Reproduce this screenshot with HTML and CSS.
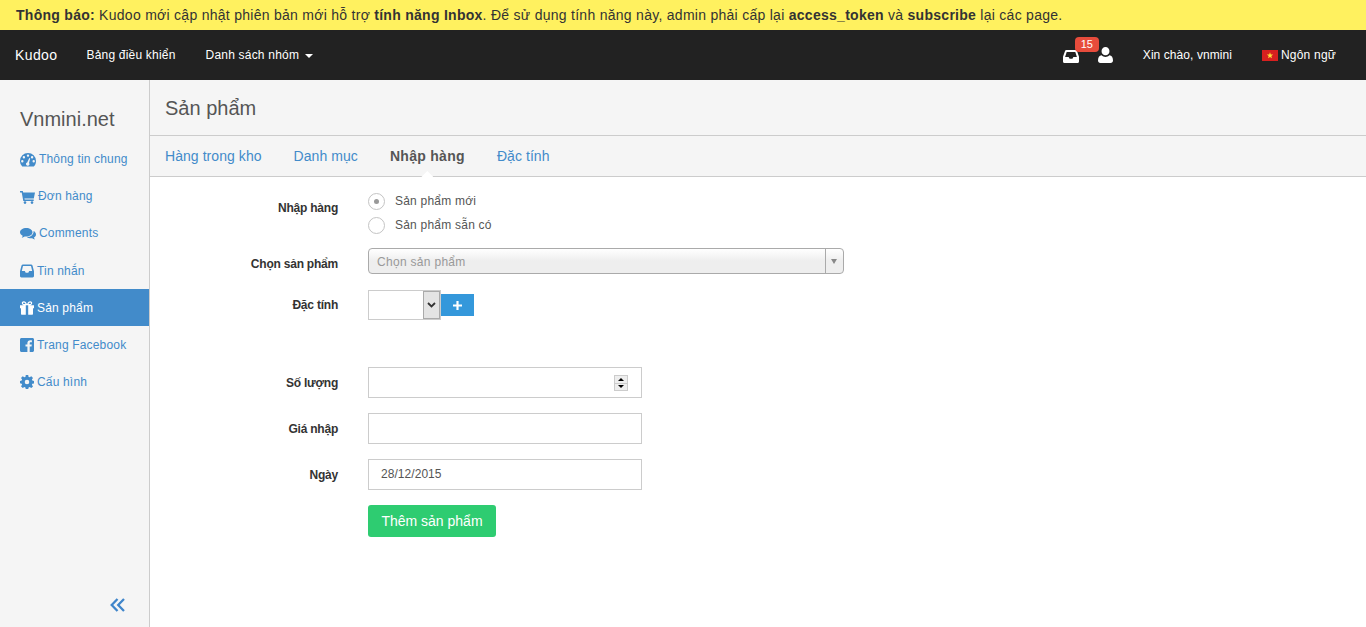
FILE: index.html
```html
<!DOCTYPE html>
<html lang="vi">
<head>
<meta charset="utf-8">
<title>Kudoo</title>
<link rel="stylesheet" href="styles.css">
</head>
<body>
<div class="notice"><b>Thông báo:</b> Kudoo mới cập nhật phiên bản mới hỗ trợ <b>tính năng Inbox</b>. Để sử dụng tính năng này, admin phải cấp lại <b>access_token</b> và <b>subscribe</b> lại các page.</div>
<nav class="topbar">
  <a class="brand">Kudoo</a>
  <a class="top-link">Bảng điều khiển</a>
  <a class="top-link">Danh sách nhóm <i class="caret"></i></a>
  <div class="top-right">
    <span class="inbox-wrap">
      <svg class="top-icon" viewBox="0 0 16 13"><path fill="#fff" fill-rule="evenodd" d="M3.400 0h9.200c.6 0 1.100.3 1.300.8L16 6.800v4.700c0 .8-.6 1.500-1.400 1.500H1.400C.6 13 0 12.300 0 11.500V6.800L2.100.8C2.300.3 2.800 0 3.400 0zM3.700 2 2.100 6.900h3.500l1 1.900h2.800l1-1.900h3.500L12.300 2z"/></svg>
      <span class="badge">15</span>
    </span>
    <svg class="top-icon user" viewBox="0 0 15 16"><path fill="#fff" d="M7.500 0a3.900 3.900 0 0 1 3.900 4.100 3.900 3.900 0 0 1-3.900 4.200 3.900 3.900 0 0 1-3.900-4.200A3.900 3.900 0 0 1 7.500 0zM3.600 8.300c1 1 2.400 1.600 3.900 1.600s2.900-.6 3.900-1.600c2.400.2 3.600 2.300 3.600 5.200 0 1.500-1 2.500-2.400 2.500H2.400C1 16 0 15 0 13.500c0-2.900 1.200-5 3.600-5.200z"/></svg>
    <a class="top-link hello">Xin chào, vnmini</a>
    <a class="top-link lang">
      <svg class="flag" viewBox="0 0 16 11"><rect width="16" height="11" fill="#d8201f"/><path fill="#ffdf3a" d="m8 2.300.8 2.300h2.400L9.300 6l.7 2.300L8 6.900 6 8.300 6.700 6 4.800 4.600h2.400z"/></svg>
      Ngôn ngữ</a>
  </div>
</nav>
<div class="shell">
  <aside class="sidebar">
    <h2 class="site">Vnmini.net</h2>
    <ul class="menu">
      <li class="low"><a><svg class="mi" viewBox="0 0 16 14"><path fill-rule="evenodd" d="M8 0a8 8 0 0 1 8 8c0 2.300-.8 4.300-2.200 5.600H2.200A7.700 7.700 0 0 1 0 8a8 8 0 0 1 8-8zM8 1.400a1.200 1.200 0 1 0 0 2.400 1.200 1.200 0 0 0 0-2.400zM3.900 3a1.200 1.200 0 1 0 0 2.400 1.200 1.200 0 0 0 0-2.400zm8.200 0a1.200 1.200 0 1 0 0 2.400 1.200 1.200 0 0 0 0-2.400zM2.300 7a1.200 1.200 0 1 0 0 2.400 1.200 1.200 0 0 0 0-2.400zm11.400 0a1.200 1.200 0 1 0 0 2.400 1.200 1.200 0 0 0 0-2.400zM9.300 5 7.200 9.400a1.700 1.700 0 1 0 1.800.500L10.200 5.400z"/></svg>Thông tin chung</a></li>
      <li class="low"><a><svg class="mi cart" viewBox="0 0 15 14"><path d="M0 1h2.800l.4 1.400H15l-1.200 6H4.400l.3 1.100h9v1.400H3.300L1.700 2.400H0z"/><circle cx="5" cy="12.600" r="1.300"/><circle cx="12" cy="12.600" r="1.300"/></svg>Đơn hàng</a></li>
      <li class="low"><a><svg class="mi" viewBox="0 0 16 14"><path d="M6.300 1c3.400 0 6.200 1.900 6.200 4.300S9.700 9.600 6.300 9.600c-.6 0-1.100 0-1.600-.1-.9.700-2 1.100-3.200 1.300.6-.6 1-1.300 1.200-2.100C1 7.900 0 6.700 0 5.300 0 2.900 2.800 1 6.300 1z"/><path d="M13.600 4.100c1.400.7 2.400 1.900 2.400 3.300 0 1.300-.8 2.400-2.100 3.100.2.800.6 1.400 1.100 2-1.100-.2-2.100-.6-2.900-1.300-.4.100-.9.100-1.300.1-1.500 0-2.900-.4-3.900-1.100 3.700-.1 6.900-2.200 6.700-6.100z"/></svg>Comments</a></li>
      <li class="tall"><a><svg class="mi inbox" viewBox="0 0 14 13"><path fill-rule="evenodd" d="M3 0h8c.7 0 1.200.3 1.500.9L14 6.800V11.500c0 .8-.6 1.400-1.400 1.400H1.400C.6 12.900 0 12.300 0 11.500V6.800L1.500.9C1.800.3 2.300 0 3 0zM3 1.500 1.800 6.600h3l.9 1.700h2.600l.9-1.700h3L11 1.500z"/></svg>Tin nhắn</a></li>
      <li class="active"><a><svg class="mi inbox" viewBox="0 0 14 14"><path fill-rule="evenodd" d="M0 4.300h14v3H13v5.500c0 .6-.4 1-1 1H2c-.6 0-1-.4-1-1V7.300H0zM5.800 4.300h2.400v9.500H5.800zM3.800.3c1.400 0 2.500 1.300 3.200 3C7.700 1.600 8.800.3 10.200.3c1.200 0 2 .8 2 1.800s-.9 2.200-2.200 2.200H4C2.700 4.300 1.800 3.100 1.800 2.100s.8-1.800 2-1.800zm0 1.200c-.5 0-.8.300-.8.700 0 .5.500.9 1.100.9h1.500C5.100 2.100 4.400 1.500 3.800 1.500zm6.400 0c-.6 0-1.300.6-1.800 1.600h1.500c.6 0 1.100-.4 1.100-.9 0-.4-.3-.7-.8-.7z"/></svg>Sản phẩm</a></li>
      <li><a><svg class="mi inbox" viewBox="0 0 14 14"><path d="M1.500 0h11C13.300 0 14 .7 14 1.500v11c0 .8-.7 1.500-1.500 1.500H9.700V8.600h1.800l.3-2.100H9.700V5.200c0-.6.200-1 1-1h1.200V2.300c-.2 0-.9-.1-1.700-.1-1.700 0-2.800 1-2.800 2.900v1.400H5.500v2.100h1.900V14H1.500C.7 14 0 13.300 0 12.500v-11C0 .7.700 0 1.500 0z"/></svg>Trang Facebook</a></li>
      <li><a><svg class="mi inbox" viewBox="0 0 14 14"><path fill-rule="evenodd" d="M5.800 0h2.400l.4 1.900 1 .4L11.300 1.200 13 2.900l-1.100 1.700.4 1 1.700.4v2.400l-1.700.4-.4 1 1.100 1.600-1.700 1.700-1.700-1.100-1 .4-.4 1.900H5.800l-.4-1.900-1-.4-1.700 1.100L1 11.300l1.100-1.600-.4-1L0 8.300V5.900l1.700-.3.400-1L1 2.900 2.700 1.200 4.400 2.300l1-.4zM7 4.700a2.300 2.300 0 1 0 0 4.600 2.300 2.300 0 0 0 0-4.600z"/></svg>Cấu hình</a></li>
    </ul>
    <svg class="collapse" viewBox="0 0 15 14"><path fill="none" stroke="#3f85ca" stroke-width="2.300" d="M7.500 1 1.700 7l5.800 6M14 1 8.200 7l5.800 6"/></svg>
  </aside>
  <main class="content">
    <h1 class="page-title">Sản phẩm</h1>
    <ul class="tabs">
      <li><a>Hàng trong kho</a></li>
      <li><a>Danh mục</a></li>
      <li class="current"><a>Nhập hàng</a></li>
      <li><a>Đặc tính</a></li>
    </ul>
    <form class="form">
      <div class="row row-radio">
        <label class="lab">Nhập hàng</label>
        <div class="radios">
          <div class="radio"><span class="dot on"></span>Sản phẩm mới</div>
          <div class="radio"><span class="dot"></span>Sản phẩm sẵn có</div>
        </div>
      </div>
      <div class="row row-chosen">
        <label class="lab">Chọn sản phẩm</label>
        <div class="chosen"><span>Chọn sản phẩm</span><i class="chosen-arrow"></i></div>
      </div>
      <div class="row row-attr">
        <label class="lab">Đặc tính</label>
        <div class="mini-select"><i class="select-btn"><svg viewBox="0 0 9 6"><path fill="none" stroke="#333" stroke-width="1.800" d="M1 1l3.500 3.500L8 1"/></svg></i></div>
        <button type="button" class="add">
          <svg viewBox="0 0 10 10"><path fill="#fff" d="M3.800 0h2.400v3.800H10v2.400H6.200V10H3.800V6.200H0V3.800h3.800z"/></svg>
        </button>
      </div>
      <div class="row row-input row-qty">
        <label class="lab">Số lượng</label>
        <div class="field"><i class="spin"><b class="half"><b class="up"></b></b><b class="half"><b class="down"></b></b></i></div>
      </div>
      <div class="row row-input">
        <label class="lab">Giá nhập</label>
        <div class="field"></div>
      </div>
      <div class="row row-input">
        <label class="lab">Ngày</label>
        <div class="field">28/12/2015</div>
      </div>
      <div class="row row-btn">
        <button type="button" class="submit">Thêm sản phẩm</button>
      </div>
    </form>
  </main>
</div>
</body>
</html>
```
FILE: styles.css
```css
* { box-sizing: border-box; }
html, body { margin: 0; height: 100%; overflow: hidden; }
body { font-family: "Liberation Sans", Arial, sans-serif; font-size: 12px; color: #333; background: #fff; display: flex; flex-direction: column; }
ul { list-style: none; margin: 0; padding: 0; }
h1, h2 { margin: 0; font-weight: 400; }

.notice { height: 30px; line-height: 30px; padding-left: 16px; background: #fff15f; font-size: 14px; letter-spacing: .275px; color: #333; white-space: nowrap; }

.topbar { height: 50px; flex: none; background: #222; display: flex; align-items: center; color: #fff; }
.brand { font-size: 14px; letter-spacing: .4px; margin-left: 15px; margin-right: 29px; }
.top-link { font-size: 12px; letter-spacing: .2px; margin-right: 30px; white-space: nowrap; }
.caret { display: inline-block; margin-left: 2px; vertical-align: middle; border-top: 4px solid #fff; border-left: 4px solid transparent; border-right: 4px solid transparent; }
.top-right { margin-left: auto; display: flex; align-items: center; }
.inbox-wrap { position: relative; display: flex; margin-top: 2px; }
.top-icon { width: 16px; height: 13px; display: block; }
.top-icon.user { width: 15px; height: 16px; margin-left: 19px; margin-right: 30px; }
.badge { position: absolute; left: 12px; top: -13px; width: 24px; height: 15px; border-radius: 4px; background: #e74c3c; color: #fff; font-size: 11px; line-height: 15px; text-align: center; }
.hello { margin-right: 30px; letter-spacing: .07px; }
.lang { margin-right: 30px; display: flex; align-items: center; gap: 3px; }
.flag { width: 16px; height: 11px; display: block; }

.shell { flex: 1; display: flex; min-height: 0; }
.sidebar { width: 150px; flex: none; position: relative; background: #f5f5f5; border-right: 1px solid #ccc; }
.site { font-size: 20px; line-height: 24px; padding: 27px 0 9px 20px; color: #555; }
.menu a { display: flex; align-items: center; height: 37px; padding-left: 20px; color: #428bca; letter-spacing: .17px; }
.menu .tall a { height: 38px; padding-top: 1px; }
.menu .low .mi { margin-top: 3px; }
.menu .active a { background: #428bca; color: #fff; }
.mi { width: 16px; height: 14px; margin-right: 3px; fill: #428bca; flex: none; }
.mi.cart { width: 15px; }
.mi.inbox { width: 14px; }
.active .mi { fill: #fff; }
.collapse { position: absolute; left: 110px; top: 518px; width: 15px; height: 14px; }

.content { flex: 1; min-width: 0; }
.page-title { height: 56px; line-height: 57px; padding-left: 15px; font-size: 20px; color: #555; background: #f5f5f5; border-bottom: 1px solid #ccc; }
.tabs { height: 41px; display: flex; gap: 32px; padding-left: 15px; background: #f5f5f5; border-bottom: 1px solid #ccc; font-size: 14px; letter-spacing: .06px; line-height: 40px; color: #428bca; }
.tabs .current { position: relative; font-weight: 700; letter-spacing: .3px; color: #555; }
.tabs .current::after { content: ""; position: absolute; left: 50%; bottom: -1px; margin-left: -6px; width: 12px; height: 6px; background: #fff; clip-path: polygon(50% 0, 100% 100%, 0 100%); }

.form { display: flex; flex-direction: column; }
.row { display: flex; align-items: flex-start; padding-left: 218px; position: relative; }
.lab { position: absolute; left: 0; width: 188px; text-align: right; font-weight: 700; letter-spacing: -.22px; color: #333; }
.row-radio { margin-top: 12px; height: 59px; }
.row-radio .lab { top: 12px; }
.radio { display: flex; align-items: center; height: 24px; color: #555; letter-spacing: .22px; }
.dot { width: 17px; height: 17px; border: 1px solid #c4c4c4; border-radius: 50%; margin-right: 10px; display: flex; align-items: center; justify-content: center; background: #fff; }
.dot.on::after { content: ""; width: 5px; height: 5px; border-radius: 50%; background: #999; }
.row-chosen .lab { top: 9px; }
.chosen { width: 476px; height: 26px; border: 1px solid #aaa; border-radius: 4px; background: linear-gradient(#fff, #eee 50%, #eee); display: flex; align-items: center; justify-content: space-between; padding-left: 8px; color: #999; letter-spacing: .3px; }
.chosen span { margin-top: 2px; }
.chosen-arrow { width: 18px; height: 24px; border-left: 1px solid #aaa; position: relative; }
.chosen-arrow::after { content: ""; position: absolute; left: 5px; top: 10px; border-top: 5px solid #888; border-left: 3px solid transparent; border-right: 3px solid transparent; }
.row-attr { margin-top: 16px; height: 30px; }
.row-attr .lab { top: 8px; }
.mini-select { width: 73px; height: 30px; border: 1px solid #ccc; display: flex; justify-content: flex-end; }
.select-btn { width: 17px; height: 28px; background: #e4e4e4; border: 1px solid #aaa; display: flex; align-items: center; justify-content: center; }
.select-btn svg { width: 9px; height: 6px; }
.add { width: 33px; height: 22px; margin-top: 4px; border: 0; padding: 0; background: #3498db; display: flex; align-items: center; justify-content: center; }
.add svg { width: 9px; height: 9px; }
.row-input { margin-top: 15px; }
.row-qty { margin-top: 47px; }
.row-input .lab { top: 9px; }
.field { width: 274px; height: 31px; border: 1px solid #ccc; padding-left: 12px; line-height: 29px; color: #555; position: relative; letter-spacing: .05px; }
.spin { position: absolute; right: 13px; top: 7px; width: 14px; height: 16px; border: 1px solid #ccc; display: flex; flex-direction: column; background: #ccc; gap: 1px; }
.half { flex: 1; background: #eee; display: flex; align-items: center; justify-content: center; }
.up { border-bottom: 3px solid #000; border-left: 3px solid transparent; border-right: 3px solid transparent; }
.down { border-top: 3px solid #000; border-left: 3px solid transparent; border-right: 3px solid transparent; }
.row-btn { margin-top: 15px; }
.submit { width: 128px; height: 32px; border: 0; border-radius: 3px; background: #2ecc71; color: #fff; font: 14px "Liberation Sans", Arial, sans-serif; padding: 0; }
```
